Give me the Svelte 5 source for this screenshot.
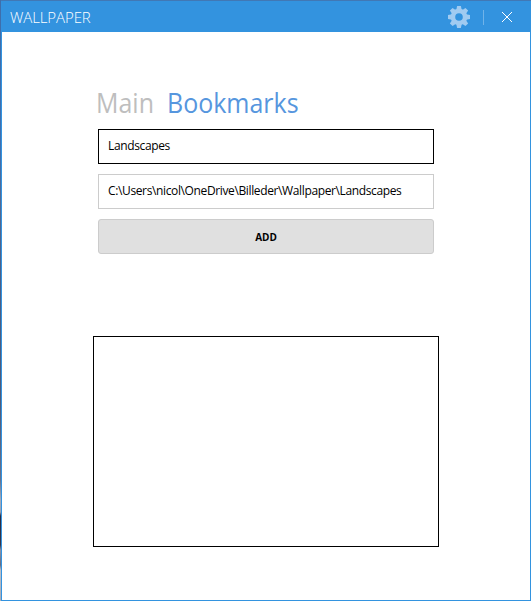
<script>
  let name = $state('Landscapes');
  let path = $state('C:\\Users\\nicol\\OneDrive\\Billeder\\Wallpaper\\Landscapes');
  const teeth = [0, 45, 90, 135, 180, 225, 270, 315];
</script>

<div class="desktop">
  <div class="window">
    <header>
      <span class="title">WALLPAPER</span>
      <button class="settings" aria-label="Settings">
        <svg width="22" height="22" viewBox="-11 -11 22 22">
          <g fill="#a1cbf1">
            {#each teeth as angle}
              <path d="M-2.7-7 L-1.9-11 H1.9 L2.7-7Z" transform="rotate({angle})" />
            {/each}
            <path fill-rule="evenodd" d="M0-8.3A8.3 8.3 0 1 1 0 8.3A8.3 8.3 0 1 1 0-8.3ZM0-3.8A3.8 3.8 0 1 0 0 3.8A3.8 3.8 0 1 0 0-3.8Z" />
          </g>
        </svg>
      </button>
      <span class="divider"></span>
      <button class="close" aria-label="Close">
        <svg width="10" height="10" viewBox="0 0 10 10">
          <path d="M0 0L10 10M10 0L0 10" stroke="#fff" stroke-width="1" />
        </svg>
      </button>
    </header>
    <main>
      <nav>
        <span class="tab main-tab">Main</span>
        <span class="tab active">Bookmarks</span>
      </nav>
      <form>
        <div class="field focused"><span class="name">{name}</span></div>
        <div class="field"><span class="path">{path}</span></div>
        <button class="add" type="button"><span>ADD</span></button>
      </form>
      <div class="list"></div>
    </main>
  </div>
</div>

<style>
  :global(body) {
    margin: 0;
    overflow: hidden;
  }
  .desktop {
    box-sizing: border-box;
    width: 531px;
    height: 601px;
    padding: 1px 0 0 1px;
    font-family: 'Open Sans', 'Noto Sans', sans-serif;
    background: linear-gradient(#3e6eab 0, #3f70b0 150px, #526a94 200px, #4a5f88 280px, #4d5a7a 400px, #65728f 480px, #a4acbd 500px, #9aa2b5 512px, #292b42 516px, #34364d 545px, #8c93a8 550px, #626c85 565px, #bcc0ca 570px, #a9adb9 601px);
  }
  .window {
    box-sizing: border-box;
    height: 600px;
    border: 1px solid #3393df;
    border-top: 0;
    background: #fff;
    box-shadow: 0 -1px #4178b5;
  }
  header {
    box-sizing: border-box;
    display: flex;
    align-items: center;
    height: 31px;
    padding: 0 18px 0 8px;
    background: #3393df;
  }
  button {
    padding: 0;
    border: 0;
    background: none;
    font-family: inherit;
  }
  svg {
    display: block;
  }
  .title {
    flex: 1;
    color: #fff;
    font-size: 15px;
    font-weight: 300;
    line-height: 20px;
    letter-spacing: -0.1px;
  }
  .divider {
    width: 1px;
    height: 15px;
    margin: 1px 18px 0 13px;
    background: #70b3e9;
  }
  .close {
    margin-top: 1px;
  }
  main {
    padding: 54px 91px 0;
  }
  nav {
    display: flex;
    height: 34px;
    padding-left: 3px;
    font-size: 27px;
    line-height: 34px;
    white-space: nowrap;
  }
  .tab {
    color: #bebebe;
    transform: scaleX(0.925);
    transform-origin: 0 50%;
  }
  .main-tab {
    width: 71px;
  }
  .tab.active {
    color: #5696de;
  }
  form {
    display: flex;
    flex-direction: column;
    gap: 10px;
    margin: 9px 5px 0;
  }
  .field,
  .add {
    box-sizing: border-box;
    height: 35px;
    border: 1px solid #ccc;
  }
  .field {
    padding-left: 9px;
    font-size: 12px;
    line-height: 32px;
    letter-spacing: -0.37px;
    color: #000;
    white-space: nowrap;
  }
  .field.focused {
    border-color: #000;
  }
  .add {
    border-radius: 3px;
    background: #e0e0e0;
    color: #000;
    font-size: 10px;
    font-weight: 700;
  }
  .list {
    box-sizing: border-box;
    height: 211px;
    margin-top: 82px;
    border: 1px solid #000;
  }
</style>
